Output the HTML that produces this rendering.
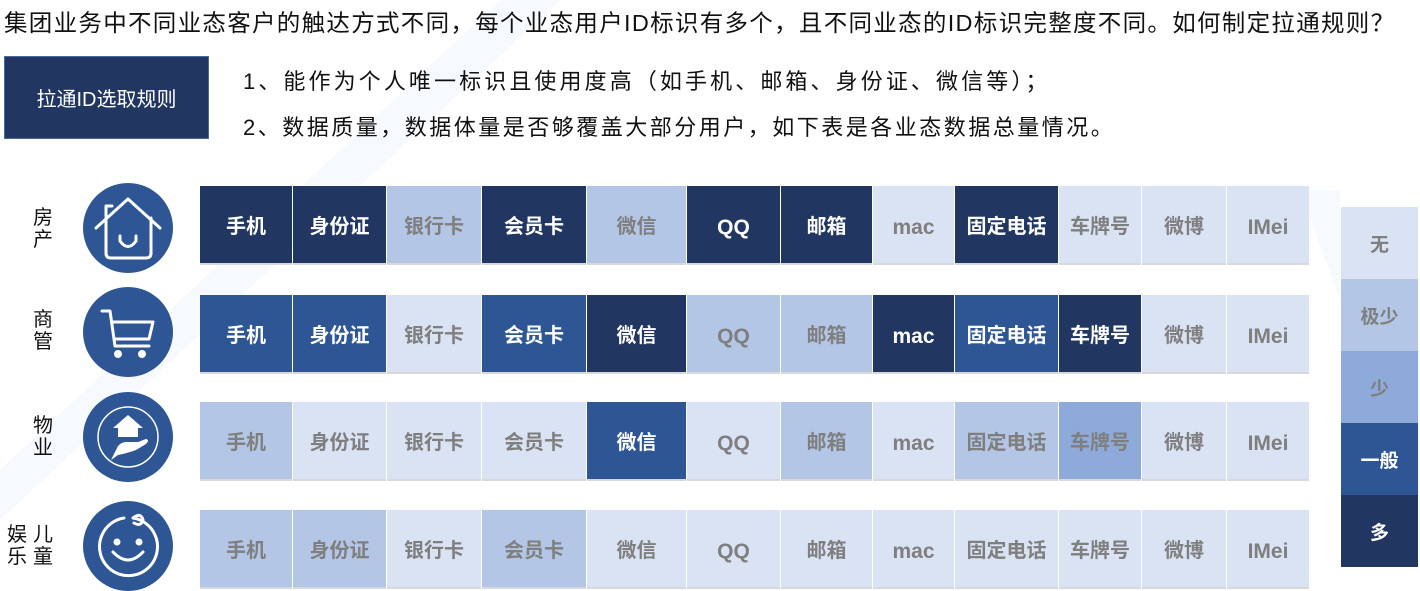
<!DOCTYPE html>
<html><head><meta charset="utf-8"><style>
*{margin:0;padding:0;box-sizing:border-box}
body{width:1420px;height:591px;position:relative;background:#fff;font-family:"Liberation Sans","Noto Sans CJK SC",sans-serif;overflow:hidden}
.abs{position:absolute}
.t{white-space:nowrap;color:#111}
.c{position:absolute;height:79px;display:flex;align-items:center;justify-content:center;font-weight:bold;font-size:20px;color:#7f7f7f;border-bottom:2px solid #d8d8d8}
.c span.l{position:relative;top:3px;font-size:21px}
.D{background:#213761;color:#fff}.B{background:#2e5594;color:#fff}.L{background:#b3c6e5}.LL{background:#dae3f3}.M{background:#8eaadb}
.lg{position:absolute;left:1341px;width:77px;height:72px;display:flex;align-items:center;justify-content:center;font-weight:bold;font-size:19px;color:#7f7f7f}
.lg.B,.lg.D{color:#fff}
.lab{position:absolute;font-size:20px;line-height:22px;color:#111;width:22px}
</style></head><body>
<svg class="abs" style="left:0;top:0" width="1420" height="591">
<polygon points="0,470 500,0 560,0 0,520" fill="#f6f9fd"/>
<polygon points="1300,190 1340,190 1340,300" fill="#f6f9fd"/>
</svg>
<div class="abs t" style="left:4px;top:4px;font-size:23.5px;letter-spacing:1.3px">集团业务中不同业态客户的触达方式不同，每个业态用户ID标识有多个，且不同业态的ID标识完整度不同。如何制定拉通规则？</div>
<div class="abs" style="left:4px;top:56px;width:205px;height:83px;background:#213761;border:1px solid #4a6a9a;color:#fff;font-size:20px;display:flex;align-items:center;justify-content:center">拉通ID选取规则</div>
<div class="abs t" style="left:243px;top:64px;font-size:22px;letter-spacing:3.1px">1、能作为个人唯一标识且使用度高（如手机、邮箱、身份证、微信等）；</div>
<div class="abs t" style="left:243px;top:110px;font-size:22px;letter-spacing:2.5px">2、数据质量，数据体量是否够覆盖大部分用户，如下表是各业态数据总量情况。</div>

<div class="lab" style="left:33px;top:207px">房<br>产</div>
<div class="lab" style="left:33px;top:309px">商<br>管</div>
<div class="lab" style="left:33px;top:415px">物<br>业</div>
<div class="lab" style="left:33px;top:524px">儿<br>童</div>
<div class="lab" style="left:7px;top:524px">娱<br>乐</div>

<svg class="abs" style="left:0;top:0" width="200" height="591" fill="none" stroke="#fff" stroke-width="3" stroke-linecap="round" stroke-linejoin="round">
<circle cx="128" cy="228" r="45" fill="#2e5594" stroke="none"/>
<circle cx="128" cy="332" r="45" fill="#2e5594" stroke="none"/>
<circle cx="128" cy="437" r="45" fill="#2e5594" stroke="none"/>
<circle cx="128" cy="546" r="45" fill="#2e5594" stroke="none"/>
<path d="M96 228 L128 199 L160 228 M106 218 V253 Q106 258 111 258 H146 Q151 258 151 253 V218 M106 216 V206 H112"/>
<path d="M120 236 V241 Q128 252 136 241 V236"/>
<path d="M102 311 H110 L115 346 H149 M112 322 H153 L149 339 H115"/>
<circle cx="118" cy="354" r="4" fill="#fff" stroke="none"/><circle cx="142" cy="354" r="4" fill="#fff" stroke="none"/>
<circle cx="128" cy="437" r="30" stroke-width="1.5"/>
<path d="M128 415 L143 428 H138 V437 H118 V428 H113 Z" fill="#fff" stroke="none"/>
<path d="M111 460 L118 446 Q122 441 130 442 H138 L146 439 Q150 440 146 444 L136 450 Q128 453 118 455 Z" fill="#fff" stroke="none"/>
<path d="M133 518 A29 29 0 1 1 124 518 M133 518 Q141 512 143 520 Q141 527 134 523"/>
<circle cx="117" cy="542" r="3.5" fill="#fff" stroke="none"/><circle cx="139" cy="542" r="3.5" fill="#fff" stroke="none"/>
<path d="M113 552 Q128 568 143 552"/>
</svg>

<div id="grid"></div>
<script>
var xs=[200,293,387,482,587,687,781,873,955,1059,1142,1227,1310];
var names=["手机","身份证","银行卡","会员卡","微信","<span class=l>QQ</span>","邮箱","<span class=l>mac</span>","固定电话","车牌号","微博","<span class=l>IMei</span>"];
var tops=[186,295,402,510];
var rows=[
"D D L D L D D LL D LL LL LL",
"B B LL B D L L D B D LL LL",
"L LL LL LL B LL L LL L M LL LL",
"L L LL L LL LL LL LL LL LL LL LL"];
var h="";
rows.forEach(function(r,i){r.split(" ").forEach(function(c,j){
h+='<div class="c '+c+'" style="left:'+xs[j]+'px;top:'+tops[i]+'px;width:'+(xs[j+1]-xs[j]-1)+'px">'+names[j]+'</div>';});});
document.getElementById("grid").innerHTML=h;
</script>
<div class="lg LL" style="top:207px">无</div>
<div class="lg L" style="top:279px">极少</div>
<div class="lg M" style="top:351px">少</div>
<div class="lg B" style="top:423px">一般</div>
<div class="lg D" style="top:495px">多</div>
</body></html>
